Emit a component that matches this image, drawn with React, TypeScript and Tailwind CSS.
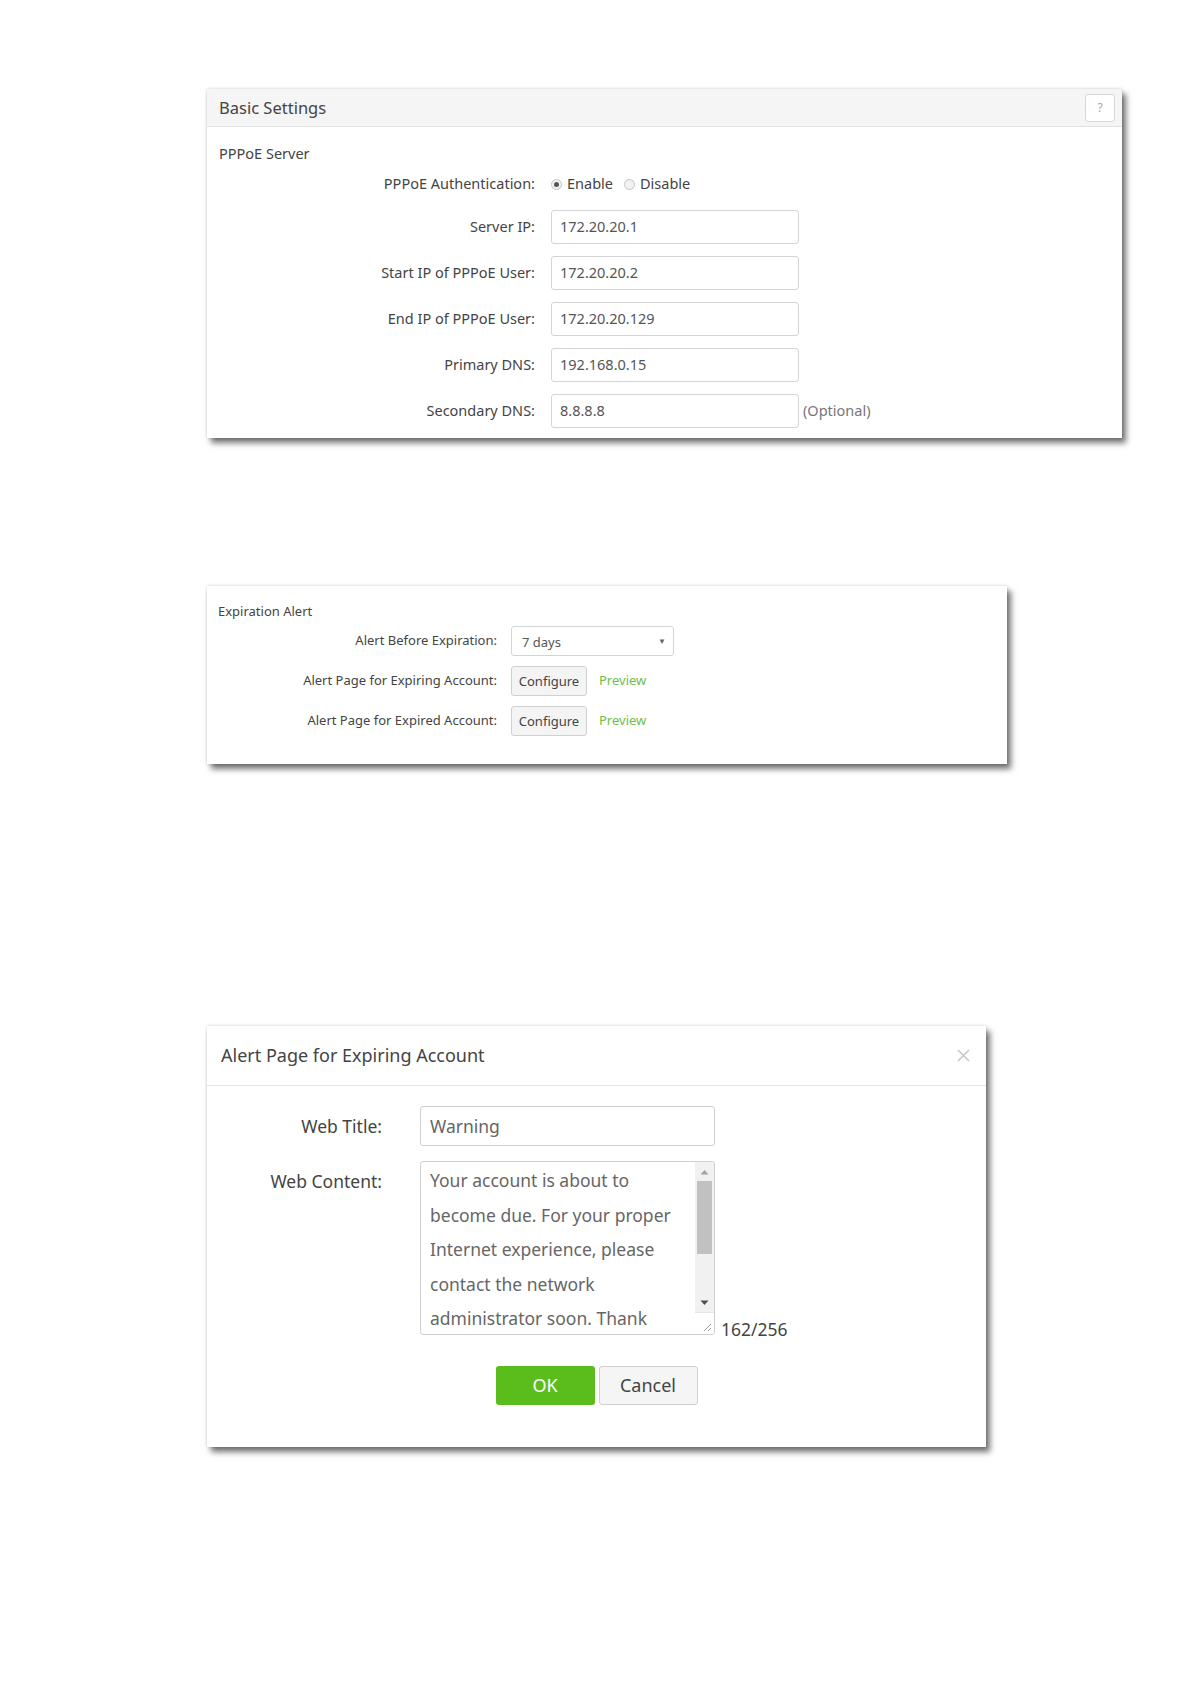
import React from 'react';

const panelShadow =
  'shadow-[0_0_3px_rgba(0,0,0,0.18),4px_5px_6px_rgba(0,0,0,0.55)]';

const ipRows = [
  { label: 'Server IP:', value: '172.20.20.1' },
  { label: 'Start IP of PPPoE User:', value: '172.20.20.2' },
  { label: 'End IP of PPPoE User:', value: '172.20.20.129' },
  { label: 'Primary DNS:', value: '192.168.0.15' },
  { label: 'Secondary DNS:', value: '8.8.8.8', note: '(Optional)' },
];

const contentLines = [
  'Your account is about to',
  'become due. For your proper',
  'Internet experience, please',
  'contact the network',
  'administrator soon. Thank',
];

function Radio({ checked }: { checked?: boolean }) {
  return (
    <span className="w-[11px] h-[11px] rounded-full border border-[#c4c4c4] bg-[#f2f2f2] flex items-center justify-center">
      {checked && <span className="w-[5px] h-[5px] rounded-full bg-[#555]" />}
    </span>
  );
}

function BasicSettings() {
  return (
    <div className={`w-[915px] bg-white ${panelShadow}`}>
      <div className="h-[38px] bg-[#f5f5f5] border-b border-[#e2e2e2] flex items-center justify-between pl-[12px] pr-[7px]">
        <span className="text-[16.5px] text-[#444] pt-[2px]">Basic Settings</span>
        <span className="w-[30px] h-[28px] border border-[#d6d6d6] rounded-[3px] bg-white flex items-center justify-center text-[12px] text-[#aaa]">
          ?
        </span>
      </div>
      <div className="pt-[16px] pb-[10px] pl-[12px] text-[14.5px] text-[#444]">
        <div className="h-[20px] leading-[20px]">PPPoE Server</div>
        <div className="mt-[11px] h-[20px] flex items-center">
          <div className="w-[316px] text-right">PPPoE Authentication:</div>
          <div className="ml-[16px] flex items-center gap-[5px]">
            <Radio checked />
            <span>Enable</span>
            <span className="w-[1px]" />
            <Radio />
            <span>Disable</span>
          </div>
        </div>
        <div className="mt-[16px] flex flex-col gap-[12px]">
          {ipRows.map((row) => (
            <div key={row.label} className="h-[34px] flex items-center">
              <div className="w-[316px] text-right">{row.label}</div>
              <div className="ml-[16px] w-[248px] h-[34px] border border-[#d4d4d4] rounded-[3px] flex items-center px-[8px] text-[#555]">
                {row.value}
              </div>
              {row.note && <span className="ml-[4px] text-[#777]">{row.note}</span>}
            </div>
          ))}
        </div>
      </div>
    </div>
  );
}

function ExpirationAlert() {
  return (
    <div className={`w-[800px] bg-white pt-[16px] pb-[28px] pl-[11px] text-[13px] text-[#444] ${panelShadow}`}>
      <div className="h-[18px] leading-[18px]">Expiration Alert</div>
      <div className="mt-[6px] flex flex-col gap-[10px]">
        <div className="h-[30px] flex items-center">
          <div className="w-[279px] text-right">Alert Before Expiration:</div>
          <div className="ml-[14px] w-[163px] h-[30px] border border-[#d4d4d4] rounded-[3px] flex items-center justify-between pl-[10px] pr-[7px] text-[#555]">
            <span className="pt-[3px]">7 days</span>
            <span className="text-[8px] text-[#666]">▼</span>
          </div>
        </div>
        {['Alert Page for Expiring Account:', 'Alert Page for Expired Account:'].map((l) => (
          <div key={l} className="h-[30px] flex items-center">
            <div className="w-[279px] text-right">{l}</div>
            <div className="ml-[14px] w-[76px] h-[30px] border border-[#d0d0d0] rounded-[3px] bg-[#f4f4f4] flex items-center justify-center text-[#444] pt-[2px]">
              Configure
            </div>
            <span className="ml-[12px] text-[#6cc04a]">Preview</span>
          </div>
        ))}
      </div>
    </div>
  );
}

function AlertDialog() {
  return (
    <div className={`w-[779px] bg-white text-[#444] ${panelShadow}`}>
      <div className="h-[60px] border-b border-[#e4e4e4] flex items-center justify-between pl-[14px] pr-[16px]">
        <span className="text-[18px]">Alert Page for Expiring Account</span>
        <svg width="13" height="13" viewBox="0 0 13 13" className="text-[#c8c8c8]">
          <path d="M1 1L12 12M12 1L1 12" stroke="currentColor" strokeWidth="1.6" />
        </svg>
      </div>
      <div className="pt-[20px] pb-[42px] text-[17.5px]">
        <div className="flex items-center">
          <div className="w-[175px] text-right">Web Title:</div>
          <div className="ml-[38px] w-[295px] h-[40px] border border-[#d0d0d0] rounded-[3px] flex items-center px-[9px] text-[#666]">
            Warning
          </div>
        </div>
        <div className="mt-[15px] flex items-start">
          <div className="w-[175px] text-right mt-[7px]">Web Content:</div>
          <div className="ml-[38px] w-[295px] h-[174px] border border-[#cfcfcf] rounded-[3px] flex overflow-hidden">
            <div className="flex-1 pl-[9px] pt-[1px] text-[#666] leading-[34.5px] whitespace-nowrap overflow-hidden">
              {contentLines.map((t) => (
                <div key={t}>{t}</div>
              ))}
            </div>
            <div className="w-[19px] flex flex-col bg-[#f1f1f1]">
              <div className="h-[19px] flex items-center justify-center">
                <svg width="9" height="6" viewBox="0 0 9 6">
                  <path d="M0.5 5.5L4.5 1L8.5 5.5Z" fill="#a3a3a3" />
                </svg>
              </div>
              <div className="mx-[2px] h-[73px] bg-[#c1c1c1]" />
              <div className="flex-1" />
              <div className="h-[19px] flex items-center justify-center">
                <svg width="9" height="6" viewBox="0 0 9 6">
                  <path d="M0.5 0.5L4.5 5L8.5 0.5Z" fill="#505050" />
                </svg>
              </div>
              <div className="h-[22px] bg-white border-t border-[#e6e6e6] flex items-end justify-end p-[2px]">
                <svg width="9" height="9" viewBox="0 0 9 9">
                  <path d="M8 1L1 8M8 5L5 8" stroke="#9a9a9a" strokeWidth="1" />
                </svg>
              </div>
            </div>
          </div>
          <span className="self-end ml-[6px] mb-[-7px] text-[#444]">162/256</span>
        </div>
        <div className="mt-[31px] flex justify-center gap-[4px] text-[18px]">
          <div className="w-[99px] h-[39px] rounded-[3px] bg-[#5bbd1c] text-white flex items-center justify-center">
            OK
          </div>
          <div className="w-[99px] h-[39px] rounded-[3px] bg-[#f5f5f5] border border-[#cfcfcf] flex items-center justify-center text-[#444]">
            Cancel
          </div>
        </div>
      </div>
    </div>
  );
}

export default function App() {
  return (
    <div
      className="w-[1191px] min-h-[1684px] bg-white pl-[207px] pt-[89px]"
      style={{ fontFamily: '"Noto Sans", "Open Sans", Arial, sans-serif' }}
    >
      <BasicSettings />
      <div className="mt-[148px]">
        <ExpirationAlert />
      </div>
      <div className="mt-[262px]">
        <AlertDialog />
      </div>
    </div>
  );
}
